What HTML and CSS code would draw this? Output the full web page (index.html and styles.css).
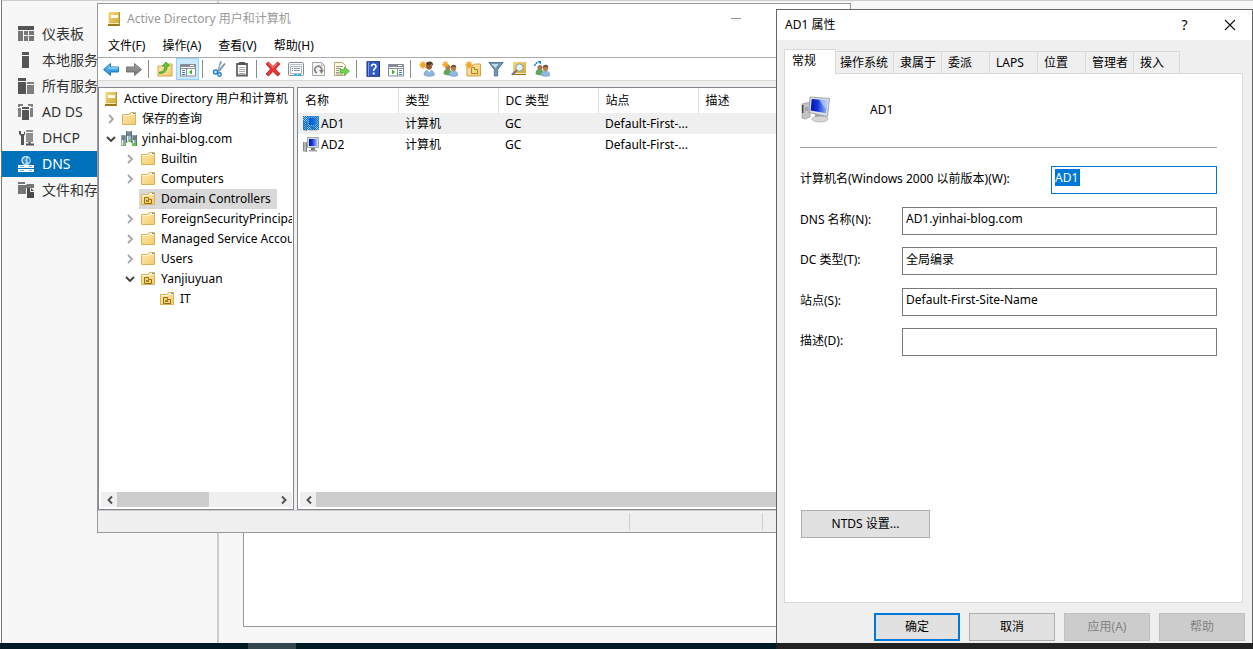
FILE: index.html
```html
<!DOCTYPE html>
<html lang="zh-CN">
<head>
<meta charset="utf-8">
<title>AD1 属性</title>
<link rel="stylesheet" href="styles.css">
</head>
<body>
<svg class="defs" aria-hidden="true">
  <defs>
    <linearGradient id="gFold" x1="0" y1="0" x2="1" y2="1"><stop offset="0" stop-color="#ffe9ae"/><stop offset="1" stop-color="#f3cb70"/></linearGradient>
    <linearGradient id="gGold" x1="0" y1="0" x2="1" y2="1"><stop offset="0" stop-color="#f3dc80"/><stop offset="1" stop-color="#cda43a"/></linearGradient>
    <linearGradient id="gScr" x1="0" y1="0" x2="1" y2="0"><stop offset="0" stop-color="#0510b4"/><stop offset=".4" stop-color="#1433d6"/><stop offset="1" stop-color="#9cc0fa"/></linearGradient>
    <linearGradient id="gBlue" x1="0" y1="0" x2="0" y2="1"><stop offset="0" stop-color="#7ed0f8"/><stop offset="1" stop-color="#127fd6"/></linearGradient>
    <linearGradient id="gGray" x1="0" y1="0" x2="0" y2="1"><stop offset="0" stop-color="#a8a8a8"/><stop offset="1" stop-color="#707070"/></linearGradient>
    <pattern id="dots" width="2" height="2" patternUnits="userSpaceOnUse"><path d="M0 0h1v1h-1zM1 1h1v1h-1z" fill="#0078d7" shape-rendering="crispEdges"/></pattern>
  </defs>
  <symbol id="book" viewBox="0 0 16 16"><path d="M2 1h12v12h-12z" fill="url(#gGold)"/><path d="M2 13h12v2h-12z" fill="#9c7a1c"/><path d="M2 12h12v1h-12z" fill="#f7e9a8"/><path d="M2 1h1v12h-1z" fill="#fbf0b4"/><path d="M13 1h1v13h-1z" fill="#b5902c"/><path d="M5 4h7v3h-7z" fill="#fffdf0"/></symbol>
  <symbol id="folder" viewBox="0 0 16 16"><path d="M1.500 3.500h6l2-2h5v12h-13z" fill="url(#gFold)" stroke="#d9b25c"/><path d="M2 4.500h7l1.500-1h3.500" stroke="#fff5d0" fill="none"/><path d="M10 2.500h2.500" stroke="#fff"/><path d="M12 2.500h2" stroke="#3d9be6"/></symbol>
  <symbol id="ou" viewBox="0 0 16 16"><use href="#folder"/><path d="M4.500 6.500h4v2h3v4h-7z" fill="#f0d173" stroke="#92701b"/><path d="M6 9h3v2h-3z" fill="#a98227"/></symbol>
  <symbol id="domain" viewBox="0 0 16 16"><path d="M5 0h6v11h-6z" fill="#a9b8c0"/><path d="M0 4h5v11h-5zM11 4h5v11h-5z" fill="#93a5ae"/><path d="M6 2h4M6 4h4M1 6h3M1 8h3M12 6h3M12 8h3" stroke="#485860"/><path d="M5.500 0v12M10.500 0v12M15.500 4v11" stroke="#60727c"/><path d="M6.500 5v5M1.500 9v5M12.500 9v5" stroke="#edf4f7"/><path d="M3 12h2v2h-2zM8 9h2v2h-2zM12 12h3v3h-3z" fill="#50d91c"/></symbol>
  <symbol id="chev" viewBox="0 0 16 16"><path d="M6 4l4 4-4 4" fill="none" stroke="#a5a5a5" stroke-width="1.800"/></symbol>
  <symbol id="chevd" viewBox="0 0 16 16"><path d="M4 6l4 4 4-4" fill="none" stroke="#404040" stroke-width="1.900"/></symbol>
  <symbol id="pc" viewBox="0 0 16 16"><path d="M0 5h4v10h-3l-1-1z" fill="#b8b8b8"/><path d="M.5 5v9M3.500 5v10" stroke="#858585"/><path d="M1 8.500h1" stroke="#58c83c"/><rect x="4.500" y=".5" width="11" height="10" fill="#d5d9e2" stroke="#a4a9b4"/><path d="M6 2h8v7h-8z" fill="url(#gScr)"/><path d="M8 11h4v2h-4z" fill="#777"/><path d="M6 13h8v1.500h-8z" fill="#a5a5a5"/></symbol>
  <symbol id="pcsel" viewBox="0 0 16 16"><use href="#pc"/><rect width="16" height="14" fill="#0078d7" opacity=".35"/><rect width="16" height="14" fill="url(#dots)"/></symbol>
  <symbol id="pcbig" viewBox="0 0 30 28"><path d="M1 8l8-2v15l-5 2-3-1z" fill="#c4c4c4" stroke="#8a8a8a" stroke-width=".6"/><path d="M1 9h1.500v8h-1.500z" fill="#3d4a3d"/><path d="M4 12h3M4 14h3" stroke="#888"/><path d="M14 18l9 2v5h-9z" fill="#9f9f9f"/><ellipse cx="19" cy="23" rx="8" ry="3" fill="#d6d6d6" stroke="#9a9a9a" stroke-width=".6"/><path d="M9 1l19.500 1.500-2 18-18.500-4z" fill="#dde0e6" stroke="#8c919b" stroke-width=".8"/><path d="M10.700 3l15.800 1.300-1.500 13-15.300-2.800z" fill="url(#gScr)"/><path d="M18 3.600l8.500.7-.8 7.500c-3 1-5-5-7.700-8.200z" fill="#c1d6ff" opacity=".65"/></symbol>
  <symbol id="back" viewBox="0 0 16 16"><path d="M.5 8.500l7-6v3.500h8v5h-8v3.500z" fill="url(#gBlue)" stroke="#1770b4" stroke-width=".9"/><path d="M6 7h9" stroke="#b4e7ff"/></symbol>
  <symbol id="fwd" viewBox="0 0 16 16"><path d="M15.500 8.500l-7-6v3.500h-8v5h8v3.500z" fill="url(#gGray)" stroke="#6c6c6c" stroke-width=".9"/></symbol>
  <symbol id="up" viewBox="0 0 16 16"><path d="M1 5h5l2-2h7v12h-14z" fill="url(#gFold)" stroke="#c99d3e" stroke-width=".9"/><path d="M2.500 11c4 0 5-2 5-6h-2l3.500-4 3.500 4h-2.300c0 5-3 7.500-7.700 7.500z" fill="#62cb37" stroke="#318c19" stroke-width=".7"/></symbol>
  <symbol id="panes" viewBox="0 0 16 16"><path d="M.5 3.500h15v11.500h-15z" fill="#fff" stroke="#858c94"/><path d="M1 4h14v2h-14z" fill="#858c94"/><path d="M10 4.500h4" stroke="#fff"/><path d="M1 7.500h14M6.500 7v8" stroke="#858c94"/><path d="M2 9.500h3M2 11.500h3M2 13.500h3" stroke="#3a83ca"/><path d="M12 8.500v5l-3-2.500z" fill="#31b421"/></symbol>
  <symbol id="play" viewBox="0 0 16 16"><path d="M.5 3.500h15v11.500h-15z" fill="#fff" stroke="#858c94"/><path d="M1 4h14v2h-14z" fill="#858c94"/><path d="M10 4.500h4" stroke="#fff"/><path d="M1 7.500h14M9.500 7v8" stroke="#858c94"/><path d="M11 9.500h3M11 11.500h3M11 13.500h3" stroke="#3a83ca"/><path d="M4 8.500v5l3-2.500z" fill="#31b421"/></symbol>
  <symbol id="cut" viewBox="0 0 16 16"><path d="M10 .5l-2.800 9.500M14 2.500l-6.500 8" stroke="#6e90ae" stroke-width="1.700"/><path d="M9.600 3l-1.800 6" stroke="#dcecf8" stroke-width=".7"/><circle cx="4.500" cy="11" r="2" fill="none" stroke="#197fce" stroke-width="1.500"/><circle cx="8.500" cy="13.500" r="1.700" fill="none" stroke="#197fce" stroke-width="1.500"/></symbol>
  <symbol id="clip" viewBox="0 0 16 16"><path d="M3 3h10v11.500h-10z" fill="#fff" stroke="#606060" stroke-width="1.800"/><path d="M5 1h6v3h-6z" fill="#555"/><path d="M5 6.500h6M5 8.500h6M5 10.500h6M5 12.500h6" stroke="#a5a5a5"/></symbol>
  <symbol id="del" viewBox="0 0 16 16"><path d="M1 3l2.500-2 4.500 4.500L12.500 1 15 3l-4.500 5 4.500 5-2.500 2L8 10.500 3.500 15 1 13l4.500-5z" fill="#e33535" stroke="#b91e1e" stroke-width=".8"/><path d="M3.500 2.200l4.500 4.500 4.500-4.500" stroke="#ff8f84" fill="none"/></symbol>
  <symbol id="props" viewBox="0 0 16 16"><rect x=".5" y="1.500" width="15" height="13" rx="1" fill="#f7f9fb" stroke="#858c94"/><path d="M2 3.500h12" stroke="#b8c1c8"/><path d="M2.500 5.500h11v7h-11z" fill="#fff" stroke="#aeb7bf"/><path d="M4 7.500h1M4 9.500h1" stroke="#258bd2"/><path d="M6 7.500h6M6 9.500h6" stroke="#8c969e"/><path d="M6 14h3M10 14h3" stroke="#29b9e8" stroke-width="2"/></symbol>
  <symbol id="refresh" viewBox="0 0 16 16"><path d="M1.500 1.500h9l3 3v10h-12z" fill="#f7f7f7" stroke="#a5a5a5"/><path d="M10.500 1.500v3h3" fill="none" stroke="#bbb"/><path d="M6 12a3.500 3.500 0 1 1 4.500-2" fill="none" stroke="#858585" stroke-width="1.800"/><path d="M8 9h5l-2.500 4z" fill="#858585"/></symbol>
  <symbol id="export" viewBox="0 0 16 16"><path d="M.5 1.500h8l3 3v10h-11z" fill="#fffbe6" stroke="#b9a775"/><path d="M2 5.500h7M2 7.500h5M2 9.500h3M2 11.500h3M2 13h7" stroke="#837e70" stroke-width=".8"/><path d="M6 8.500h4.500V6l5 4.200-5 4.200V12H6z" fill="#72d550" stroke="#4aae30" stroke-width=".7"/></symbol>
  <symbol id="help" viewBox="0 0 16 16"><rect x="2" y=".7" width="12.500" height="14.600" fill="#3259cb" stroke="#1b307c"/><path d="M3.500 1v14" stroke="#7f9cee"/><path d="M6.400 5.500q0-2.300 2.200-2.300T11 5.500q0 1.300-1.300 2.200-1.100.8-1.100 2.300" stroke="#fff" stroke-width="1.600" fill="none"/><path d="M7.700 11.500h2v2h-2z" fill="#fff"/></symbol>
  <symbol id="spark" viewBox="0 0 8 8"><path d="M4 0l.8 2.300 2-1.300-1.200 2.200L8 4l-2.400.8 1.200 2-2-1.100L4 8l-.8-2.300-2 1.100 1.200-2L0 4l2.400-.8L1.200 1l2 1.300z" fill="#f1a325" stroke="#f1a325" stroke-width=".5"/></symbol>
  <symbol id="user" viewBox="0 0 16 16"><path d="M5 14q0-5 5-5t5.500 5q-5 3-10.500 0z" fill="#8fb8de" stroke="#6b95bf" stroke-width=".6"/><path d="M8.300 9l1.700 2.500L12 9z" fill="#fff"/><circle cx="10" cy="5.500" r="3" fill="#8d5c32"/><path d="M6.500 5q0-4.500 4-4.500t3.500 4.500l-1-1.500q-3-.5-6.500 1.500z" fill="#4b3b2e"/><use href="#spark" width="8" height="8"/></symbol>
  <symbol id="users" viewBox="0 0 16 16"><path d="M1.500 13q0-5 4-5t4 5q-4 2.500-8 0z" fill="#62a55c"/><circle cx="6" cy="6.500" r="2.500" fill="#a9784f"/><path d="M7 14.500q0-4.500 4.500-4.500t4.500 4.500q-4 2-9 0z" fill="#8fb8de" stroke="#6b95bf" stroke-width=".5"/><circle cx="11.500" cy="7.500" r="2.600" fill="#b98351"/><path d="M8.800 7q0-3.200 2.900-3.200t2.500 3.200q-2-2-5.400 0z" fill="#6b5641"/></symbol>
  <symbol id="newusers" viewBox="0 0 16 16"><use href="#users"/><use href="#spark" width="7" height="7"/></symbol>
  <symbol id="newou" viewBox="0 0 16 16"><path d="M2 5h6l1.500-2h6v12h-13.500z" fill="url(#gFold)" stroke="#c99d3e" stroke-width=".9"/><path d="M6.500 6.500h3v2h3v4h-6z" fill="#f8dc83" stroke="#a5822b"/><use href="#spark" width="8" height="8"/></symbol>
  <symbol id="filter" viewBox="0 0 16 16"><path d="M.8 1.500h14.400l-5.500 7v6.500h-3.400V8.500z" fill="#7295b1" stroke="#486b86" stroke-width=".8"/><path d="M3.500 3h7L7.500 7z" fill="#c7deed"/></symbol>
  <symbol id="find" viewBox="0 0 16 16"><path d="M2 1h13v13h-13z" fill="url(#gGold)"/><path d="M2 13.500h13" stroke="#94721a"/><path d="M2 12.500h13" stroke="#f7e9a8"/><circle cx="8.500" cy="6.500" r="3.600" fill="#e8f6fc" stroke="#8d9ba2"/><path d="M6 9.300l-5.200 4.500" stroke="#777" stroke-width="2"/></symbol>
  <symbol id="findusers" viewBox="0 0 16 16"><use href="#users"/><path d="M.8 5q0-3.300 3.700-3.300" stroke="#0782c7" stroke-width="1.400" fill="none" stroke-dasharray="2 .7"/><path d="M3.500 0h3.500v3.500z" fill="#0782c7"/></symbol>
  <symbol id="min" viewBox="0 0 16 16"><path d="M3 7.500h10" stroke="#999"/></symbol>
  <symbol id="x" viewBox="0 0 16 16"><path d="M3 3l10 10M13 3l-10 10" stroke="#111" stroke-width="1.100"/></symbol>
  <symbol id="sl" viewBox="0 0 16 16"><path d="M11 4.500L7.500 8l3.500 3.500" fill="none" stroke="#505050" stroke-width="1.900"/></symbol>
  <symbol id="sr" viewBox="0 0 16 16"><path d="M6 4.500L9.500 8 6 11.500" fill="none" stroke="#505050" stroke-width="1.900"/></symbol>
  <symbol id="s-dash" viewBox="0 0 16 16"><path d="M0 0h16v4h-16z" fill="#555"/><path d="M0 5h5v10h-5zM6 5h4v4h-4zM11 5h5v4h-5zM6 10h4v5h-4zM11 10h5v5h-5z" fill="#777"/></symbol>
  <symbol id="s-local" viewBox="0 0 16 16"><path d="M4 0h7v3h-7zM4 4h7v12h-7z" fill="#555"/></symbol>
  <symbol id="s-all" viewBox="0 0 16 16"><path d="M0 0h8v3h-8zM0 4h8v12h-8z" fill="#555"/><path d="M9 4h7v2h-7zM9 7h7v9h-7z" fill="#808080"/></symbol>
  <symbol id="s-ad" viewBox="0 0 16 16"><path d="M0 0h5v2H2v1H0zM10 0h5v3h-2V2h-3zM0 4h3v9H0zM12 4h3v9h-3z" fill="#808080"/><path d="M4 3h7v2H4zM4 6h7v10H4z" fill="#555"/></symbol>
  <symbol id="s-dhcp" viewBox="0 0 16 16"><path d="M1 1v3l2 2v9h3V6l1-2V1L6 2.500v1.500H3V1z" fill="#555"/><path d="M8 0h7v2H8zM8 3h7v9H8z" fill="#909090"/><path d="M11.500 12v2M8 14.500h8" stroke="#555" stroke-width="2"/></symbol>
  <symbol id="s-dns" viewBox="0 0 16 16"><circle cx="8" cy="4.500" r="4.800" fill="#b5d9f0"/><path d="M4.500 4l3-3 1 2-2 1 2 2-2 2zM9 3l2-1 1 3-2 2z" fill="#2a8aca"/><path d="M0 9h16v3H0zM0 13h16v3H0z" fill="#fff"/><path d="M2 10.500h4M11 10.500h3M2 14.500h4M11 14.500h3" stroke="#70b2dd"/></symbol>
  <symbol id="s-file" viewBox="0 0 16 16"><path d="M0 0h7v2H0zM0 3h8l1-1h7v4H8v6H0z" fill="#777"/><path d="M9 6h4l3 3v7H9z" fill="#4b4b4b"/><path d="M12.500 6v3.500h3.500" fill="none" stroke="#f7f7f7"/></symbol>
</svg>

<div class="desktop">
  <section class="manager">
    <nav class="side">
      <a class="side-item" href="#"><svg class="icon"><use href="#s-dash"/></svg>仪表板</a>
      <a class="side-item" href="#"><svg class="icon"><use href="#s-local"/></svg>本地服务器</a>
      <a class="side-item" href="#"><svg class="icon"><use href="#s-all"/></svg>所有服务器</a>
      <a class="side-item" href="#"><svg class="icon"><use href="#s-ad"/></svg>AD DS</a>
      <a class="side-item" href="#"><svg class="icon"><use href="#s-dhcp"/></svg>DHCP</a>
      <a class="side-item current" href="#"><svg class="icon"><use href="#s-dns"/></svg>DNS</a>
      <a class="side-item" href="#"><svg class="icon"><use href="#s-file"/></svg>文件和存储服务</a>
    </nav>
    <div class="manager-main"><div class="sheet"></div></div>
  </section>
  <footer class="taskbar"><span class="task"></span></footer>

  <section class="window aduc">
    <header class="titlebar">
      <svg class="icon"><use href="#book"/></svg>
      <h1 class="title">Active Directory 用户和计算机</h1>
      <button class="win-btn minimize" aria-label="最小化"><svg class="icon"><use href="#min"/></svg></button>
    </header>
    <nav class="menu">
      <button>文件(F)</button><button>操作(A)</button><button>查看(V)</button><button>帮助(H)</button>
    </nav>
    <div class="toolbar">
      <button aria-label="后退"><svg class="icon"><use href="#back"/></svg></button>
      <button aria-label="前进"><svg class="icon"><use href="#fwd"/></svg></button>
      <i class="sep"></i>
      <button aria-label="向上"><svg class="icon"><use href="#up"/></svg></button>
      <button class="on" aria-label="显示树"><svg class="icon"><use href="#panes"/></svg></button>
      <i class="sep"></i>
      <button aria-label="剪切"><svg class="icon"><use href="#cut"/></svg></button>
      <button aria-label="粘贴"><svg class="icon"><use href="#clip"/></svg></button>
      <i class="sep"></i>
      <button aria-label="删除"><svg class="icon"><use href="#del"/></svg></button>
      <button aria-label="属性"><svg class="icon"><use href="#props"/></svg></button>
      <button aria-label="刷新"><svg class="icon"><use href="#refresh"/></svg></button>
      <button aria-label="导出列表"><svg class="icon"><use href="#export"/></svg></button>
      <i class="sep"></i>
      <button aria-label="帮助"><svg class="icon"><use href="#help"/></svg></button>
      <button aria-label="操作窗格"><svg class="icon"><use href="#play"/></svg></button>
      <i class="sep"></i>
      <button aria-label="新建用户"><svg class="icon"><use href="#user"/></svg></button>
      <button aria-label="新建组"><svg class="icon"><use href="#newusers"/></svg></button>
      <button aria-label="新建组织单位"><svg class="icon"><use href="#newou"/></svg></button>
      <button aria-label="筛选"><svg class="icon"><use href="#filter"/></svg></button>
      <button aria-label="查找"><svg class="icon"><use href="#find"/></svg></button>
      <button aria-label="添加到组"><svg class="icon"><use href="#findusers"/></svg></button>
    </div>
    <div class="panes">
      <div class="pane tree-pane">
        <div class="tree">
          <div class="node root"><svg class="icon"><use href="#book"/></svg><span class="label">Active Directory 用户和计算机</span></div>
          <ul>
            <li><div class="node"><svg class="icon"><use href="#chev"/></svg><span class="pick"><svg class="icon"><use href="#folder"/></svg>保存的查询</span></div></li>
            <li><div class="node"><svg class="icon"><use href="#chevd"/></svg><span class="pick"><svg class="icon"><use href="#domain"/></svg>yinhai-blog.com</span></div>
              <ul>
                <li><div class="node"><svg class="icon"><use href="#chev"/></svg><span class="pick"><svg class="icon"><use href="#folder"/></svg>Builtin</span></div></li>
                <li><div class="node"><svg class="icon"><use href="#chev"/></svg><span class="pick"><svg class="icon"><use href="#folder"/></svg>Computers</span></div></li>
                <li><div class="node"><svg class="icon"></svg><span class="pick selected"><svg class="icon"><use href="#ou"/></svg>Domain Controllers</span></div></li>
                <li><div class="node"><svg class="icon"><use href="#chev"/></svg><span class="pick"><svg class="icon"><use href="#folder"/></svg>ForeignSecurityPrincipals</span></div></li>
                <li><div class="node"><svg class="icon"><use href="#chev"/></svg><span class="pick"><svg class="icon"><use href="#folder"/></svg>Managed Service Accounts</span></div></li>
                <li><div class="node"><svg class="icon"><use href="#chev"/></svg><span class="pick"><svg class="icon"><use href="#folder"/></svg>Users</span></div></li>
                <li><div class="node"><svg class="icon"><use href="#chevd"/></svg><span class="pick"><svg class="icon"><use href="#ou"/></svg>Yanjiuyuan</span></div>
                  <ul><li><div class="node"><svg class="icon"></svg><span class="pick"><svg class="icon"><use href="#ou"/></svg>IT</span></div></li></ul>
                </li>
              </ul>
            </li>
          </ul>
        </div>
        <div class="scroll"><svg class="icon"><use href="#sl"/></svg><div class="track"><div class="thumb"></div></div><svg class="icon"><use href="#sr"/></svg></div>
      </div>
      <div class="pane list-pane">
        <table class="list">
          <thead><tr><th>名称</th><th>类型</th><th>DC 类型</th><th>站点</th><th>描述</th></tr></thead>
          <tbody>
            <tr class="chosen"><td class="name"><svg class="icon"><use href="#pcsel"/></svg>AD1</td><td>计算机</td><td>GC</td><td>Default-First-...</td><td></td></tr>
            <tr><td class="name"><svg class="icon"><use href="#pc"/></svg>AD2</td><td>计算机</td><td>GC</td><td>Default-First-...</td><td></td></tr>
          </tbody>
        </table>
        <div class="scroll"><svg class="icon"><use href="#sl"/></svg><div class="track"><div class="thumb wide"></div></div><svg class="icon"><use href="#sr"/></svg></div>
      </div>
    </div>
    <footer class="status"><span class="status-main"></span><span class="status-mid"></span><span class="status-end"></span></footer>
  </section>

  <section class="window dialog">
    <header class="titlebar">
      <h2 class="title">AD1 属性</h2>
      <button class="win-btn" aria-label="上下文帮助">?</button>
      <button class="win-btn" aria-label="关闭"><svg class="icon"><use href="#x"/></svg></button>
    </header>
    <div class="dialog-body">
      <div class="tabs" role="tablist">
        <button role="tab" class="tab active" aria-selected="true">常规</button>
        <button role="tab" class="tab long">操作系统</button>
        <button role="tab" class="tab">隶属于</button>
        <button role="tab" class="tab">委派</button>
        <button role="tab" class="tab">LAPS</button>
        <button role="tab" class="tab">位置</button>
        <button role="tab" class="tab">管理者</button>
        <button role="tab" class="tab last">拨入</button>
      </div>
      <div class="sheet-panel">
        <div class="identity"><svg class="big-icon"><use href="#pcbig"/></svg><span>AD1</span></div>
        <form class="fields">
          <div class="field"><label for="f-name">计算机名(Windows 2000 以前版本)(W):</label><input id="f-name" class="short" value="AD1"></div>
          <div class="pair">
            <div class="field"><label for="f-dns">DNS 名称(N):</label><input id="f-dns" value="AD1.yinhai-blog.com"></div>
            <div class="field"><label for="f-type">DC 类型(T):</label><input id="f-type" value="全局编录"></div>
          </div>
          <div class="pair">
            <div class="field"><label for="f-site">站点(S):</label><input id="f-site" value="Default-First-Site-Name"></div>
            <div class="field"><label for="f-desc">描述(D):</label><input id="f-desc" value=""></div>
          </div>
        </form>
        <button class="btn ntds">NTDS 设置...</button>
      </div>
      <div class="actions">
        <button class="btn primary">确定</button>
        <button class="btn">取消</button>
        <button class="btn" disabled>应用(A)</button>
        <button class="btn" disabled>帮助</button>
      </div>
    </div>
  </section>
</div>
</body>
</html>
```
FILE: styles.css
```css
* { box-sizing: border-box; }

body {
  margin: 0;
  font: 12px/20px "Noto Sans", "Noto Sans CJK SC", sans-serif;
  color: #000;
}

button, input { font: inherit; color: inherit; }
button { padding: 0; border: 0; background: none; }
ul { list-style: none; margin: 0; padding: 0; }
.defs { position: absolute; width: 0; height: 0; }
.icon { width: 16px; height: 16px; flex: none; display: block; }

.desktop {
  position: relative;
  display: flex;
  flex-direction: column;
  height: 100vh;
  min-height: 600px;
  overflow: hidden;
}

/* Server manager */
.manager {
  flex: 1;
  display: flex;
  margin-left: 1px;
  background: #f7f7f7;
  border-top: 1px solid #ccc;
  border-left: 1px solid #777;
}
.side {
  width: 217px;
  padding-top: 20px;
  border-right: 2px solid #ccc;
}
.side-item {
  display: flex;
  align-items: center;
  gap: 8px;
  height: 26px;
  padding-left: 16px;
  font-size: 14px;
  color: #333;
  text-decoration: none;
  white-space: nowrap;
}
.side-item.current { background: #0072bc; color: #fff; }
.manager-main { flex: 1; display: flex; padding: 40px 24px 16px; }
.sheet { flex: 1; background: #fff; border: 1px solid #999; }

.taskbar {
  height: 6px;
  padding-left: 248px;
  background: linear-gradient(90deg, #001a24 0 776px, #222 776px);
}
.task { display: block; width: 48px; height: 6px; background: #34464e; }

/* Windows */
.window { position: absolute; display: flex; flex-direction: column; background: #efefef; }
.titlebar { display: flex; align-items: center; background: #fff; }
.title { flex: 1; margin: 0; font-size: 12px; font-weight: 400; }
.win-btn { display: grid; place-items: center; width: 45px; height: 28px; font-size: 14px; }

.aduc { left: 97px; top: 3px; right: 402px; bottom: 116px; border: 1px solid #999; }
.aduc .titlebar { height: 30px; padding-left: 8px; gap: 5px; color: #999; }
.minimize { margin-right: 92px; }
.menu { display: flex; gap: 17px; height: 23px; padding-left: 10px; background: #fff; }
.toolbar {
  display: flex;
  height: 24px;
  padding-left: 1px;
  background: #fff;
  border-top: 1px solid #aaa;
  border-bottom: 1px solid #d8d8d8;
}
.toolbar button { display: grid; place-items: center; width: 23px; height: 22px; border: 1px solid transparent; }
.toolbar .on { background: #cce8ff; border-color: #99d1ff; }
.sep { width: 1px; height: 18px; margin: 2px 4px 2px 3px; background: #8a8a8a; }

.panes { flex: 1; display: flex; gap: 3px; min-height: 0; padding-top: 6px; }
.pane { display: flex; flex-direction: column; background: #fff; border: 1px solid #828790; overflow: hidden; }
.tree-pane { width: 196px; padding-right: 1px; }
.list-pane { flex: 1; }

.tree { flex: 1; padding: 1px 0 0 4px; white-space: nowrap; overflow: hidden; }
.tree ul ul { padding-left: 19px; }
.node { display: flex; gap: 1px; align-items: center; height: 20px; }
.root { gap: 5px; }
.pick { display: flex; align-items: center; gap: 5px; height: 20px; padding: 0 4px 0 1px; }
.selected { padding-right: 6px; background: #d9d9d9; }

.scroll { display: flex; height: 15px; margin: 0 0 2px 2px; background: #efefef; }
.track { flex: 1; display: flex; }
.thumb { width: 58%; background: #cdcdcd; }
.thumb.wide { width: 92%; }

.list { border-collapse: collapse; table-layout: fixed; width: 100%; margin-bottom: auto; }
.list th {
  width: 100px;
  height: 25px;
  padding: 0 0 0 7px;
  text-align: left;
  font-weight: 400;
  border-right: 1px solid #dedede;
}
.list th:last-child { width: auto; }
.list td { height: 21px; padding: 0 0 0 7px; line-height: 21px; }
.list .name { display: flex; align-items: center; gap: 2px; padding-left: 5px; }
.chosen { background: #efefef; }

.status { display: flex; height: 22px; padding: 2px 0; border-top: 1px solid #ccc; }
.status-main { flex: 1; border-right: 1px solid #ccc; }
.status-mid { width: 133px; border-right: 1px solid #ccc; }
.status-end { width: 87px; }

/* Property dialog */
.dialog { left: 776px; top: 9px; right: 0; bottom: 6px; border: 1px solid #666; border-bottom: 0; }
.dialog .titlebar { height: 30px; padding-left: 8px; }
.dialog-body { flex: 1; display: flex; flex-direction: column; padding: 9px 7px 2px; }
.tabs { display: flex; align-items: flex-end; height: 24px; }
.tab {
  width: 48px;
  height: 22px;
  padding: 0 0 0 6px;
  text-align: left;
  white-space: nowrap;
  border: 1px solid #d9d9d9;
  border-left: 0;
  border-bottom: 0;
}
.tab.long { width: 58px; padding-left: 4px; }
.tab.last { width: 46px; }
.tab.active {
  position: relative;
  width: 52px;
  height: 25px;
  margin-bottom: -1px;
  padding: 0 0 3px 7px;
  background: #fff;
  border-left: 1px solid #d9d9d9;
}
.sheet-panel {
  flex: 1;
  margin-right: 2px;
  padding: 0 25px 0 15px;
  background: #fff;
  border: 1px solid #d9d9d9;
}
.identity {
  display: flex;
  align-items: center;
  gap: 39px;
  height: 74px;
  padding: 0 0 2px 1px;
  border-bottom: 1px solid #a0a0a0;
}
.big-icon { width: 30px; height: 28px; }
.fields { display: flex; flex-direction: column; gap: 13px; margin-top: 18px; }
.pair { display: flex; flex-direction: column; gap: 12px; }
.field { display: flex; align-items: center; }
.field label { flex: none; width: 102px; padding-bottom: 2px; white-space: nowrap; }
.field input {
  flex: 1;
  min-width: 0;
  height: 28px;
  padding: 0 3px 5px;
  background: #fff;
  border: 1px solid #7a7a7a;
}
.field label:has(+ .short) { width: 251px; }
.field .short {
  border-color: #0078d7;
  color: #fff;
  background: linear-gradient(#0078d7, #0078d7) 3px 2px / 25px 17px no-repeat #fff;
}
.btn { width: 86px; height: 28px; background: #e1e1e1; border: 1px solid #adadad; }
.btn.primary { border: 2px solid #0078d7; }
.btn:disabled { background: #ccc; border-color: #bfbfbf; color: #838383; }
.ntds { width: 129px; margin: 154px 0 0 1px; }
.actions { display: flex; justify-content: flex-end; gap: 9px; margin-top: 10px; }
```
